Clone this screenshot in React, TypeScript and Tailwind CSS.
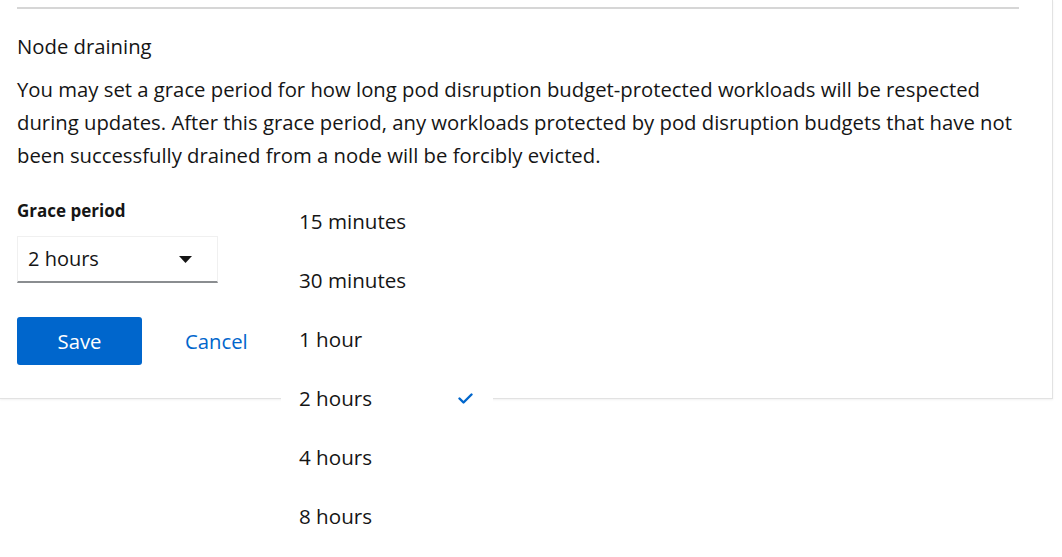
const options = ['15 minutes', '30 minutes', '1 hour', '2 hours', '4 hours', '8 hours'];

function Caret() {
  return (
    <svg width="13" height="7" viewBox="0 0 13 7" aria-hidden="true">
      <path d="M0 0h13L6.5 7z" fill="#151515" />
    </svg>
  );
}

function Check() {
  return (
    <svg width="15" height="11" viewBox="0 0 15 11" aria-hidden="true">
      <path d="M1.5 5.5l4 4 8-8" fill="none" stroke="#0066cc" strokeWidth="2.4" strokeLinecap="round" strokeLinejoin="round" />
    </svg>
  );
}

export default function App() {
  const selected = '2 hours';

  return (
    <div className="relative h-[557px] w-[1062px] overflow-hidden bg-white font-['Open_Sans',sans-serif] text-[#151515]">
      {/* settings card */}
      <div className="h-[399px] w-[1053px] border-r border-b border-[#e2e2e2] bg-white pt-[7px] pr-[33px] pl-[17px] shadow-[0_1px_2px_rgba(0,0,0,0.06)]">
        <div className="h-[2px] bg-[#d6d6d6]" />

        <h3 className="mt-[22px] text-[20.3px] leading-[30px] font-medium">Node draining</h3>

        <p className="mt-[12px] text-[20.3px] leading-[33px]">
          You may set a grace period for how long pod disruption budget-protected workloads will be respected
          during updates. After this grace period, any workloads protected by pod disruption budgets that have not
          been successfully drained from a node will be forcibly evicted.
        </p>

        <label className="mt-[27px] block text-[17px] leading-[24px] font-bold">Grace period</label>

        <button
          type="button"
          className="mt-[13px] flex h-[47px] w-[201px] items-center justify-between border border-b-2 border-[#f0f0f0] border-b-[#8a8d90] pr-[25px] pl-[10px] text-[20px]"
        >
          <span>{selected}</span>
          <Caret />
        </button>

        <div className="mt-[34px] flex items-center gap-[43px]">
          <button type="button" className="h-[48px] w-[125px] rounded-[3px] bg-[#0066cc] text-[20.3px] text-white">
            Save
          </button>
          <button type="button" className="text-[20.3px] text-[#0066cc]">
            Cancel
          </button>
        </div>
      </div>

      {/* open select menu */}
      <ul className="absolute top-[192px] left-[281px] w-[212px] bg-white">
        {options.map((o) => (
          <li key={o} className="flex h-[59px] items-center justify-between pr-[20px] pl-[18px] text-[20.6px]">
            <span>{o}</span>
            {o === selected && <Check />}
          </li>
        ))}
      </ul>
    </div>
  );
}
